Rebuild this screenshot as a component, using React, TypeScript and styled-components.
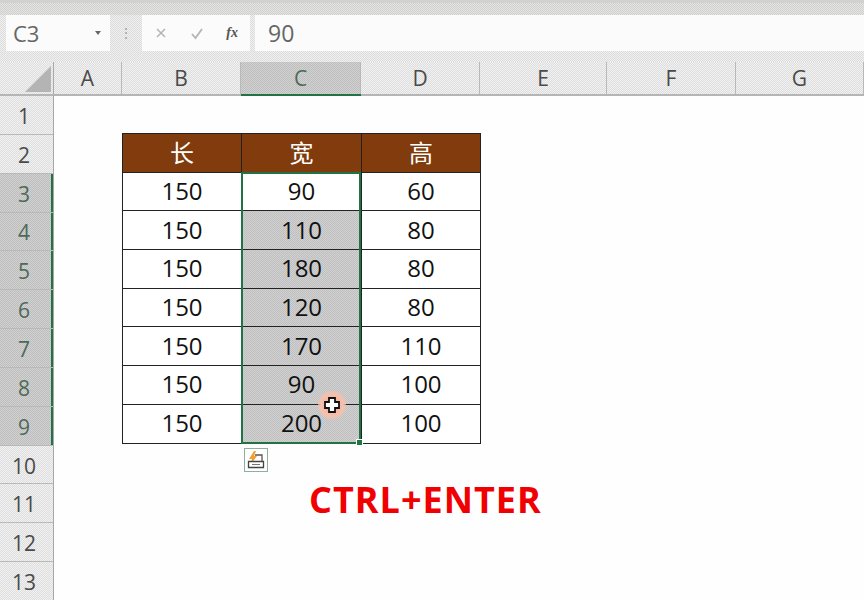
import React from 'react';
import styled, {createGlobalStyle, css} from 'styled-components';

const GlobalStyle = createGlobalStyle`
  html, body {
    margin: 0;
    padding: 0;
    background: #fff;
  }
  body {
    font-family: "Open Sans", "Liberation Sans", "Noto Sans CJK SC", sans-serif;
  }
`;

const dither = (a: string, b: string) => css`
  background-color: ${a};
  background-image: repeating-conic-gradient(${a} 0 25%, ${b} 0 50%);
  background-size: 2px 2px;
`;

const Page = styled.div`
  width: 864px;
  height: 600px;
  overflow: hidden;
  display: flex;
  flex-direction: column;
  background: #fff;
`;

const TopStrip = styled.div`
  height: 15px;
  flex: none;
  box-sizing: border-box;
  border-top: 3px solid #d2d2d2;
  ${dither('#d0d0cc', '#e4e4e2')};
`;

const FormulaBar = styled.div`
  height: 47px;
  flex: none;
  box-sizing: border-box;
  display: flex;
  align-items: flex-start;
  gap: 4px;
  padding: 0 0 0 6px;
  ${dither('#dcdcdc', '#f0f0f0')};
`;

const NameBox = styled.div`
  width: 104px;
  height: 36px;
  box-sizing: border-box;
  display: flex;
  align-items: center;
  justify-content: space-between;
  padding: 0 9px 0 7px;
  background: #fbfbfb;
  color: #666;
  font-size: 22px;
`;

const Caret = styled.span`
  width: 0;
  height: 0;
  border-left: 3px solid transparent;
  border-right: 3px solid transparent;
  border-top: 4px solid #666;
`;

const Grip = styled.div`
  width: 24px;
  height: 36px;
  display: flex;
  align-items: center;
  justify-content: center;
  color: #9a9a9a;
  font-size: 12px;
  line-height: 1;
`;

const ActionBox = styled.div`
  width: 108px;
  height: 36px;
  box-sizing: border-box;
  display: flex;
  align-items: center;
  justify-content: space-between;
  padding: 0 12px;
  background: #fbfbfb;
`;

const FxLabel = styled.span`
  font-family: "Liberation Serif", serif;
  font-style: italic;
  font-weight: 700;
  font-size: 14px;
  color: #555;
`;

const FormulaInput = styled.div`
  flex: 1;
  height: 36px;
  margin-left: 1px;
  display: flex;
  align-items: center;
  padding-left: 13px;
  background: #fbfbfb;
  color: #666;
  font-size: 23px;
`;

const ColumnHeaders = styled.div`
  height: 34px;
  flex: none;
  box-sizing: border-box;
  display: grid;
  grid-template-columns: 54px 68px 119px 120px 119px 127px 129px 128px;
  border-bottom: 2px solid #b5b5b5;
  ${dither('#dedede', '#f1f1f1')};
`;

const Corner = styled.div`
  display: flex;
  align-items: flex-end;
  justify-content: flex-end;
  padding: 0 2px 2px 0;
  border-right: 1px solid #a8a8a8;
`;

const ColHead = styled.div<{$active?: boolean}>`
  display: flex;
  align-items: center;
  justify-content: center;
  font-size: 21px;
  color: ${p => (p.$active ? '#4d6a58' : '#4a4a4a')};
  border-right: 1px solid #b9b9b9;
  ${p => p.$active && dither('#bdbdbd', '#d2d2d2')};
  ${p => p.$active && 'box-shadow: 0 2px 0 #217346;'};
`;

const Body = styled.div`
  flex: 1;
  display: flex;
  min-height: 0;
`;

const RowHeaders = styled.div`
  width: 54px;
  flex: none;
  box-sizing: border-box;
  border-right: 1px solid #a8a8a8;
  ${dither('#dedede', '#f1f1f1')};
`;

const RowHead = styled.div<{$active?: boolean}>`
  height: 38.85px;
  box-sizing: border-box;
  display: flex;
  align-items: center;
  justify-content: center;
  padding-top: 2px;
  padding-right: 5px;
  font-size: 21px;
  color: ${p => (p.$active ? '#4d6a58' : '#4a4a4a')};
  border-bottom: 1px solid #b9b9b9;
  ${p => p.$active && dither('#bdbdbd', '#d2d2d2')};
  ${p => p.$active && 'box-shadow: inset -2px 0 0 #217346;'};
`;

const Sheet = styled.div`
  flex: 1;
  padding: 37px 0 0 68px;
  display: flex;
  flex-direction: column;
  align-items: flex-start;
  background: #fefefe;
`;

const DataTable = styled.div`
  position: relative;
  display: grid;
  grid-template-columns: 119px 120px 119px;
  grid-auto-rows: 38.7px;
  border-top: 1px solid #222;
  border-left: 1px solid #222;
`;

const Cell = styled.div<{$head?: boolean; $filled?: boolean}>`
  box-sizing: border-box;
  display: flex;
  align-items: center;
  justify-content: center;
  padding-bottom: 2px;
  font-size: 24px;
  color: #111;
  background: #fff;
  border-right: 1px solid #222;
  border-bottom: 1px solid #222;
  ${p => p.$filled && dither('#c0c0c0', '#d0d0d0')};
  ${p => p.$head && css`
    ${dither('#843c0c', '#7e3b0e')};
    color: #fff;
  `};
`;

// green selection frame, sits over column C from row 3 down
const Selection = styled.div`
  position: absolute;
  left: 118px;
  top: 38px;
  width: 120px;
  height: 272px;
  box-sizing: border-box;
  border: 2px solid #217346;
  pointer-events: none;
`;

const FillHandle = styled.span`
  position: absolute;
  right: -4px;
  bottom: -4px;
  width: 5px;
  height: 5px;
  background: #217346;
  border: 1px solid #fff;
`;

const CursorHalo = styled.div`
  position: absolute;
  left: 195px;
  top: 257px;
  width: 28px;
  height: 28px;
  border-radius: 50%;
  background: radial-gradient(circle, #f2a98f 0%, #f5c0ad 55%, rgba(245, 200, 180, 0) 100%);
  display: flex;
  align-items: center;
  justify-content: center;
`;

const PasteOptions = styled.div`
  position: absolute;
  left: 121px;
  top: 314px;
  width: 24px;
  height: 24px;
  box-sizing: border-box;
  display: flex;
  align-items: center;
  justify-content: center;
  background: #fff;
  border: 1px solid #8fb0a0;
`;

const Caption = styled.div`
  margin: 34px 0 0 187px;
  font-family: "Open Sans", sans-serif;
  font-weight: 700;
  font-size: 36px;
  letter-spacing: 1px;
  line-height: 44px;
  color: #f00000;
  white-space: nowrap;
`;

const columns = ['A', 'B', 'C', 'D', 'E', 'F', 'G'];
const rows = Array.from({length: 13}, (_, i) => i + 1);
const tableRows = [
    [150, 90, 60],
    [150, 110, 80],
    [150, 180, 80],
    [150, 120, 80],
    [150, 170, 110],
    [150, 90, 100],
    [150, 200, 100],
];

const App: React.FC = () => (
    <Page>
        <GlobalStyle/>
        <TopStrip/>
        <FormulaBar>
            <NameBox>
                C3
                <Caret/>
            </NameBox>
            <Grip>⋮</Grip>
            <ActionBox>
                <svg width="14" height="14" viewBox="0 0 14 14">
                    <path d="M3 3l8 8M11 3l-8 8" stroke="#b4b4b4" strokeWidth="1.5" fill="none"/>
                </svg>
                <svg width="14" height="14" viewBox="0 0 14 14">
                    <path d="M2 8l3.500 4L12 3" stroke="#b4b4b4" strokeWidth="1.8" fill="none"/>
                </svg>
                <FxLabel>fx</FxLabel>
            </ActionBox>
            <FormulaInput>90</FormulaInput>
        </FormulaBar>
        <ColumnHeaders>
            <Corner>
                <svg width="26" height="26" viewBox="0 0 26 26">
                    <path d="M26 0V26H0Z" fill="#b4b4b4"/>
                </svg>
            </Corner>
            {columns.map(c => (
                <ColHead key={c} $active={c === 'C'}>{c}</ColHead>
            ))}
        </ColumnHeaders>
        <Body>
            <RowHeaders>
                {rows.map(r => (
                    <RowHead key={r} $active={r >= 3 && r <= 9}>{r}</RowHead>
                ))}
            </RowHeaders>
            <Sheet>
                <DataTable>
                    <Cell $head>长</Cell>
                    <Cell $head>宽</Cell>
                    <Cell $head>高</Cell>
                    {tableRows.map((row, i) => (
                        <React.Fragment key={i}>
                            <Cell>{row[0]}</Cell>
                            <Cell $filled={i > 0}>{row[1]}</Cell>
                            <Cell>{row[2]}</Cell>
                        </React.Fragment>
                    ))}
                    <Selection>
                        <FillHandle/>
                    </Selection>
                    <CursorHalo>
                        <svg width="18" height="18" viewBox="0 0 18 18">
                            <path d="M6 2h6v4h4v6h-4v4H6v-4H2V6h4z" fill="#fff" stroke="#111" strokeWidth="1.8"/>
                        </svg>
                    </CursorHalo>
                    <PasteOptions>
                        <svg width="20" height="20" viewBox="0 0 20 20">
                            <path d="M8 1L3 9h3l-1 5 6-8H8l2-5z" fill="#f0a030"/>
                            <path d="M9 5h7v6" stroke="#555" strokeWidth="1.3" fill="none"/>
                            <path d="M2.500 11.500h15v6h-15z" stroke="#444" strokeWidth="1.300" fill="#fff"/>
                            <path d="M6 14.500h8" stroke="#777" strokeWidth="1"/>
                        </svg>
                    </PasteOptions>
                </DataTable>
                <Caption>CTRL+ENTER</Caption>
            </Sheet>
        </Body>
    </Page>
);

export default App;
